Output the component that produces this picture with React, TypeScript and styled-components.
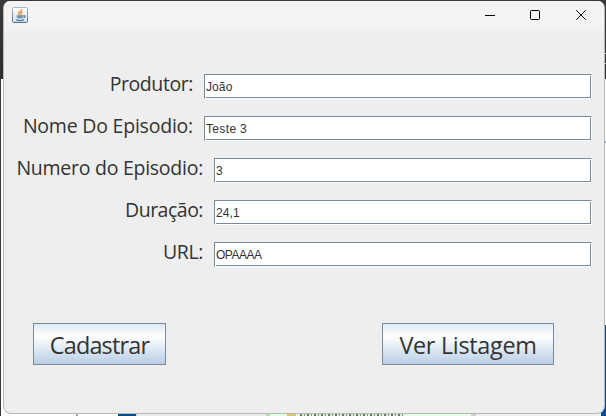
import React from "react";
import styled, { createGlobalStyle } from "styled-components";

const GlobalStyle = createGlobalStyle`
  html, body { margin: 0; overflow: hidden; }
  * { box-sizing: border-box; }
`;

/* Slivers of the windows behind show around the dialog edges. */
const Desktop = styled.div`
  width: 606px;
  height: 416px;
  padding: 1px 1px 2px 3px;
  background:
    linear-gradient(#d8d8d8, #d8d8d8) 604px 53px / 2px 1px no-repeat,
    linear-gradient(#d8d8d8, #d8d8d8) 604px 63px / 2px 1px no-repeat,
    linear-gradient(#8ba0b4, #8ba0b4) 604px 141px / 2px 2px no-repeat,
    linear-gradient(#3c3939, #2d2d2d) 0 0 / 606px 79px no-repeat,
    linear-gradient(#383636, #383636) 0 79px / 1px 337px no-repeat,
    linear-gradient(#064a8b, #064a8b) 601px 325px / 5px 91px no-repeat,
    repeating-linear-gradient(90deg, #67726a 0 2px, #d9ecd5 2px 4px, #8a927c 4px 5px, #dff3da 5px 7px) 300px 414px / 105px 2px no-repeat,
    linear-gradient(90deg, transparent 76px, #9ba9b6 76px 78px, transparent 78px 118px, #064a8b 118px 136px, #c8d4e0 136px 137px, #ececec 137px 266px, #b0dfa7 266px 270px, #e4ffe2 270px 287px, #d9c67c 287px 296px, #e4ffe2 296px 471px, #d0d0d0 471px 476px, #efefef 476px 601px, transparent 601px) 0 413px / 606px 3px no-repeat,
    #fff;
`;

const Window = styled.main`
  height: 413px;
  display: flex;
  flex-direction: column;
  overflow: hidden;
  background: #eee;
  border: 1px solid #b7b7b7;
  border-top: 0;
  border-radius: 7px 7px 8px 8px;
`;

const TitleBar = styled.header`
  flex: 0 0 30px;
  display: flex;
  align-items: center;
  justify-content: space-between;
  padding: 0 0 2px 8px;
  background: #f3f3f3;
`;

const WindowControls = styled.div`
  display: flex;
`;

const ControlButton = styled.button`
  width: 46px;
  height: 28px;
  padding: 0;
  border: 0;
  display: grid;
  place-items: center;
  background: transparent;

  &:first-child { width: 44px; }
`;

const Form = styled.form`
  display: flex;
  flex-direction: column;
  gap: 17px;
  padding: 43px 12px 0 0;
`;

const Row = styled.label<{ $labelWidth: number }>`
  display: grid;
  grid-template-columns: ${(p) => p.$labelWidth}px 1fr;
  column-gap: 11px;
  height: 25px;
`;

const Caption = styled.span<{ $spacing: number }>`
  justify-self: end;
  white-space: nowrap;
  font: 19.5px/20px "Open Sans", "Noto Sans", sans-serif;
  letter-spacing: ${(p) => p.$spacing}px;
  color: #333;
`;

const FieldFrame = styled.span`
  display: flex;
  padding: 1px 0 0 1px;
  background: #fff;
  border: 1px solid #7a8a99;
  border-right-color: #fff;
  border-bottom-color: #fff;
`;

const FieldInput = styled.input<{ $spacing: number }>`
  width: 100%;
  height: 22px;
  padding: 1px 0 0;
  border: solid #7a8a99;
  border-width: 0 1px 1px 0;
  border-radius: 0;
  outline: 0;
  background: #fff;
  color: #333;
  font: 12px "Liberation Sans", Arial, sans-serif;
  letter-spacing: ${(p) => p.$spacing}px;
`;

const Actions = styled.footer`
  display: flex;
  justify-content: space-between;
  padding: 56px 50px 0 29px;
`;

const ActionButton = styled.button<{ $width: number; $spacing: number }>`
  width: ${(p) => p.$width}px;
  height: 42px;
  padding: 1px 0 0;
  border: 1px solid #7a8a99;
  border-radius: 0;
  background: linear-gradient(#dde8f3 0%, #fff 30%, #b8cfe5 100%);
  color: #333;
  font: 23.4px/30px "Open Sans", "Noto Sans", sans-serif;
  letter-spacing: ${(p) => p.$spacing}px;
  white-space: nowrap;
`;

const JavaIcon = () => (
  <svg width="16" height="16" viewBox="0 0 16 16">
    <defs>
      <linearGradient id="plate" x2="0" y2="1">
        <stop stopColor="#fff" />
        <stop offset="1" stopColor="#d3dde5" />
      </linearGradient>
      <linearGradient id="rim" x2="0" y2="1">
        <stop stopColor="#a9bac8" />
        <stop offset="1" stopColor="#4d738f" />
      </linearGradient>
    </defs>
    <rect x=".5" y=".5" width="15" height="15" rx="1" fill="url(#plate)" stroke="url(#rim)" />
    <path d="M10 2.2C9.8 4 6.2 4.5 6.5 6.4c.1.9.9 1.2 1 2M10.6 4.7c-2 .8-2.3 1.4-1.6 2.3.3.5-.1 1-.5 1.4" fill="none" stroke="#ee8424" strokeWidth="1.2" />
    <path d="M4.5 9.1h6.8M5.2 10.8h5.5M4 12.8c2 .8 6 .8 8 0M11.3 8.8c2.4-.5 2.3 1.4.2 2" fill="none" stroke="#4a7897" strokeWidth="1.1" />
  </svg>
);

const MinimizeIcon = () => (
  <svg width="10" height="10" viewBox="0 0 10 10"><path d="M0 5.5h10" stroke="#000" /></svg>
);
const MaximizeIcon = () => (
  <svg width="10" height="10" viewBox="0 0 10 10"><rect x=".5" y=".5" width="9" height="9" rx="1" fill="none" stroke="#000" /></svg>
);
const CloseIcon = () => (
  <svg width="10" height="10" viewBox="0 0 10 10"><path d="M.2.2l9.6 9.6M9.8.2L.2 9.8" stroke="#000" /></svg>
);

const fields = [
  { label: "Produtor:", value: "João", labelWidth: 189, spacing: -0.42, valueSpacing: 0.1 },
  { label: "Nome Do Episodio:", value: "Teste 3", labelWidth: 189, spacing: -0.22, valueSpacing: 0.35 },
  { label: "Numero do Episodio:", value: "3", labelWidth: 199, spacing: -0.26, valueSpacing: 0 },
  { label: "Duração:", value: "24,1", labelWidth: 199, spacing: -0.5, valueSpacing: 0.1 },
  { label: "URL:", value: "OPAAAA", labelWidth: 199, spacing: -0.4, valueSpacing: -0.5 },
];

export default function App() {
  return (
    <Desktop>
      <GlobalStyle />
      <Window>
        <TitleBar>
          <JavaIcon />
          <WindowControls>
            <ControlButton type="button"><MinimizeIcon /></ControlButton>
            <ControlButton type="button"><MaximizeIcon /></ControlButton>
            <ControlButton type="button"><CloseIcon /></ControlButton>
          </WindowControls>
        </TitleBar>
        <Form>
          {fields.map((f) => (
            <Row key={f.label} $labelWidth={f.labelWidth}>
              <Caption $spacing={f.spacing}>{f.label}</Caption>
              <FieldFrame><FieldInput defaultValue={f.value} $spacing={f.valueSpacing} /></FieldFrame>
            </Row>
          ))}
        </Form>
        <Actions>
          <ActionButton $width={133} $spacing={-0.8}>Cadastrar</ActionButton>
          <ActionButton $width={172} $spacing={-0.3}>Ver Listagem</ActionButton>
        </Actions>
      </Window>
    </Desktop>
  );
}
